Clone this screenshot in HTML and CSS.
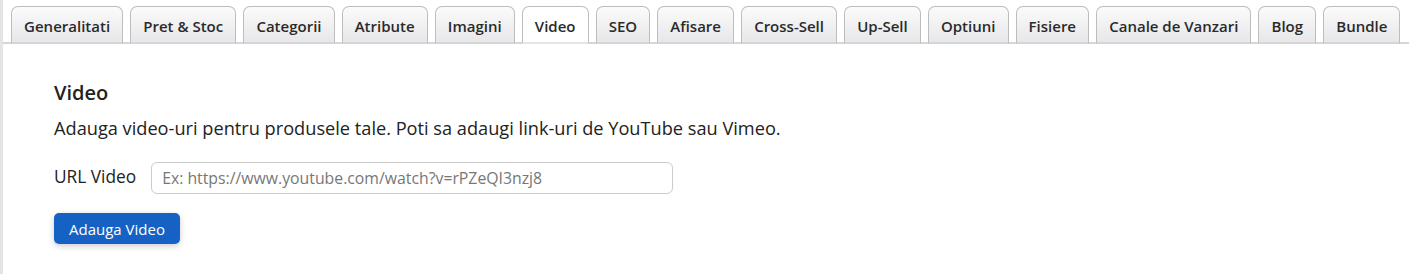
FILE: index.html
```html
<!DOCTYPE html>
<html lang="ro">

<head>
    <meta charset="UTF-8">
    <meta name="viewport" content="width=device-width, initial-scale=1.0">
    <title>Produs - Video</title>
    <link rel="stylesheet" href="styles.css">
</head>

<body>

    <!-- Tab-uri produs -->
    <div class="tabs">
        <a class="tab" href="#">Generalitati</a>
        <a class="tab" href="#">Pret &amp; Stoc</a>
        <a class="tab" href="#">Categorii</a>
        <a class="tab" href="#">Atribute</a>
        <a class="tab" href="#">Imagini</a>
        <a class="tab active" href="#">Video</a>
        <a class="tab" href="#">SEO</a>
        <a class="tab" href="#">Afisare</a>
        <a class="tab" href="#">Cross-Sell</a>
        <a class="tab" href="#">Up-Sell</a>
        <a class="tab" href="#">Optiuni</a>
        <a class="tab" href="#">Fisiere</a>
        <a class="tab" href="#">Canale de Vanzari</a>
        <a class="tab" href="#">Blog</a>
        <a class="tab" href="#">Bundle</a>
    </div>

    <div class="panel">
        <h3>Video</h3>
        <p class="info">Adauga video-uri pentru produsele tale. Poti sa adaugi link-uri de YouTube sau Vimeo.</p>

        <div class="field">
            <label for="video_url">URL Video</label>
            <input type="text" id="video_url" placeholder="Ex: https://www.youtube.com/watch?v=rPZeQI3nzj8">
        </div>

        <button class="btn-add" type="button">Adauga Video</button>
    </div>

</body>

</html>
```

FILE: styles.css
```css
* {
    margin: 0;
    padding: 0;
    box-sizing: border-box;
}

body {
    font-family: 'Open Sans', 'Liberation Sans', Arial, sans-serif;
    color: #222;
    background-color: #fff;
    border-left: 3px solid #e4e4e4;
    min-height: 274px;
}

/* Tab bar */
.tabs {
    display: flex;
    gap: 7px;
    padding: 6px 0 0 8px;
    border-bottom: 2px solid #d6d6d8;
}

.tab {
    display: block;
    height: 38px;
    line-height: 38px;
    padding: 0 12.1px;
    margin-bottom: -2px;
    font-size: 15px;
    font-weight: 600;
    color: #2a2a2a;
    text-decoration: none;
    border: 1px solid #bdbdbd;
    border-bottom: 2px solid #d6d6d8;
    border-radius: 7px 7px 0 0;
    background: linear-gradient(#fbfbfb, #e7e7ea);
}

.tab.active {
    background: #fff;
    border-bottom-color: #e6e6e6;
}

/* Continut */
.panel {
    padding: 36px 51px;
}

.panel h3 {
    font-size: 20px;
    font-weight: 600;
    color: #222;
    line-height: 26px;
}

.info {
    font-size: 18.2px;
    line-height: 24px;
    margin-top: 10px;
}

.field {
    display: flex;
    align-items: center;
    gap: 15px;
    margin-top: 22px;
}

.field label {
    font-size: 17.3px;
    margin-top: -4px;
}

.field input {
    width: 522px;
    height: 32px;
    padding: 0 10px;
    font-family: inherit;
    font-size: 15.8px;
    color: #333;
    border: 1px solid #ccc;
    border-radius: 6px;
}

.field input::placeholder {
    color: #777;
}

.btn-add {
    margin-top: 19px;
    height: 31px;
    padding: 0 15px;
    font-family: inherit;
    font-size: 15px;
    color: #fff;
    background-color: #1662c4;
    border: none;
    border-radius: 5px;
    box-shadow: 0 2px 6px rgba(0, 0, 0, 0.2);
    cursor: pointer;
}
```
